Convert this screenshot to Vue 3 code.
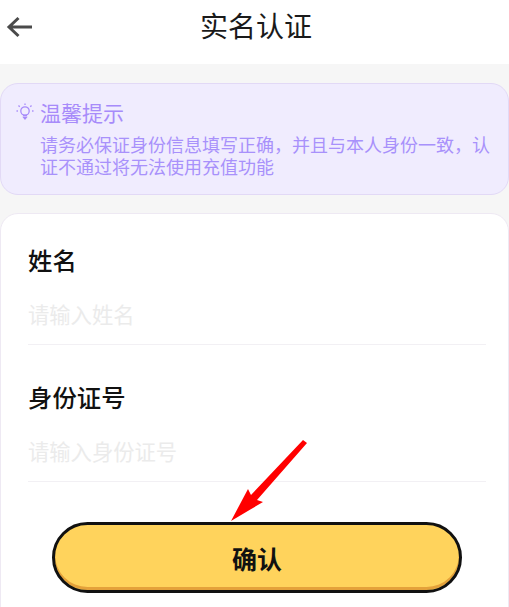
<script setup>
const fields = [
  { label: '姓名', placeholder: '请输入姓名' },
  { label: '身份证号', placeholder: '请输入身份证号' }
]
</script>

<template>
  <div class="page">
    <header class="nav">
      <svg class="back" width="28" height="24" viewBox="0 0 28 24">
        <path d="M27 12H4M13.500 3 4 12l9.500 9" fill="none" stroke="#4a4a4a" stroke-width="3" />
      </svg>
      <h1>实名认证</h1>
    </header>
    <main class="body">
      <section class="tip">
        <div class="tip-head">
          <svg width="20" height="20" viewBox="0 0 20 20" fill="none" stroke="#a78bfa" stroke-width="1.300">
            <circle cx="10" cy="9" r="4.200" />
            <path d="M8 13.500h4M8.700 15.500h2.600L10 17ZM10 1.500v1.600M3.500 3.500l1.200 1.200M16.500 3.500l-1.200 1.200M1.500 9h1.400M17.100 9h1.400" />
          </svg>
          <span>温馨提示</span>
        </div>
        <p>请务必保证身份信息填写正确，并且与本人身份一致，认证不通过将无法使用充值功能</p>
      </section>
      <section class="card">
        <div v-for="f in fields" :key="f.label" class="field">
          <label>{{ f.label }}</label>
          <div class="input">{{ f.placeholder }}</div>
        </div>
        <button class="confirm">确认</button>
        <svg class="arrow" width="90" height="92" viewBox="0 0 90 92">
          <path d="M76 3 80 6 30 63 36 65 4 84 21 52 24 58Z" fill="#ff0000" />
        </svg>
      </section>
    </main>
  </div>
</template>

<style scoped>
.page {
  width: 509px;
  height: 607px;
  overflow: hidden;
  background: #f6f6f6;
  font-family: "Noto Sans CJK SC", "Noto Sans", sans-serif;
}
.nav {
  height: 64px;
  background: #fff;
  position: relative;
  display: flex;
  align-items: center;
  justify-content: center;
}
.back {
  position: absolute;
  left: 5px;
  top: 15px;
}
h1 {
  margin: 0 0 14px 3px;
  font-size: 28px;
  line-height: 36px;
  font-weight: 400;
  color: #1a1a1a;
}
.body {
  padding-top: 19px;
}
.tip {
  box-sizing: border-box;
  height: 112px;
  padding: 14px 15px 0 14px;
  background: #f0ecfe;
  border: 1px solid #e2d9f6;
  border-radius: 18px;
}
.tip-head {
  display: flex;
  align-items: center;
  gap: 5px;
  font-size: 21px;
  line-height: 28px;
  color: #a78bfa;
}
.tip p {
  margin: 7px 0 0 25px;
  font-size: 18px;
  line-height: 22px;
  color: #a891fb;
}
.card {
  position: relative;
  margin-top: 18px;
  height: 410px;
  box-sizing: border-box;
  padding: 28px 22px 0 27px;
  background: #fff;
  border: 1px solid #eee9f3;
  border-radius: 18px 18px 0 0;
}
.field {
  height: 137px;
}
label {
  display: block;
  font-size: 24.400px;
  line-height: 36px;
  font-weight: 500;
  color: #111;
}
.input {
  margin-top: 14px;
  height: 52px;
  line-height: 44px;
  font-size: 21.300px;
  color: #ebebeb;
  border-bottom: 1px solid #f2f0f4;
}
.confirm {
  position: absolute;
  left: 51px;
  top: 308px;
  box-sizing: border-box;
  width: 410px;
  height: 71px;
  padding: 0;
  border: 3px solid #111;
  border-radius: 36px;
  background: #ffd35c;
  box-shadow: inset 0 -3px 0 #e4a13a;
  font: 700 25px/60px "Noto Sans CJK SC", sans-serif;
  color: #111;
}
.arrow {
  position: absolute;
  left: 226px;
  top: 223px;
}
</style>
